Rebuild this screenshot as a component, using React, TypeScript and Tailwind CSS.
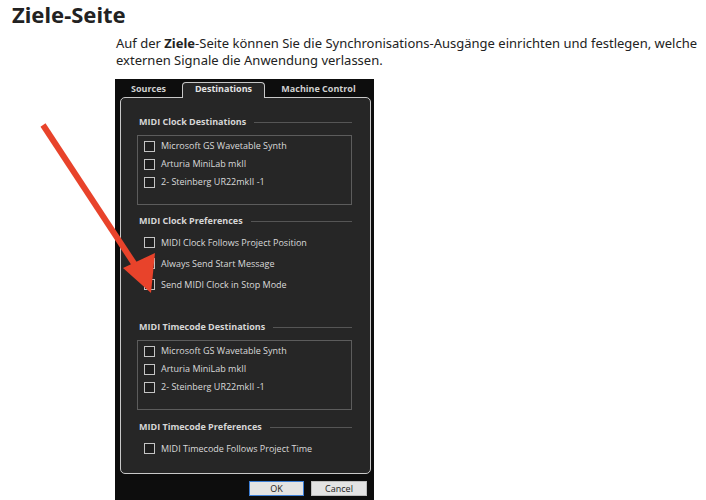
const destinations = [
  "Microsoft GS Wavetable Synth",
  "Arturia MiniLab mkII",
  "2- Steinberg UR22mkII -1",
];

function Checkbox() {
  return <span className="block h-[11px] w-[11px] shrink-0 border-[1.5px] border-[#c4c4c4] bg-[#1e1e1e]" />;
}

function GroupTitle({ label }: { label: string }) {
  return (
    <div className="flex h-[12px] items-center gap-2 pl-[2px]">
      <span className="whitespace-nowrap text-[9px] font-bold text-[#d6d6d6]">{label}</span>
      <span className="h-px flex-1 bg-[#555555]" />
    </div>
  );
}

function DeviceList() {
  return (
    <div className="flex h-[70px] flex-col border border-[#5c5c5c] pl-[6px] pt-[1px]">
      {destinations.map((d) => (
        <div key={d} className="flex h-[18px] items-center gap-[6px]">
          <Checkbox />
          <span className="whitespace-nowrap text-[9px] text-[#dadada]">{d}</span>
        </div>
      ))}
    </div>
  );
}

function PrefRow({ label }: { label: string }) {
  return (
    <div className="flex h-[21px] items-center gap-[6px] pl-[7px]">
      <Checkbox />
      <span className="whitespace-nowrap text-[9px] text-[#dadada]">{label}</span>
    </div>
  );
}

export default function App() {
  return (
    <div className="relative h-[500px] w-[706px] overflow-hidden bg-white font-['Noto_Sans',sans-serif]">
      {/* Page text */}
      <h1 className="pl-[12px] text-[22px] font-bold leading-[28px] text-[#222222]">Ziele-Seite</h1>
      <p className="ml-[116px] mt-[7px] text-[13px] leading-[17px] text-[#222222]">
        Auf der <b>Ziele</b>-Seite können Sie die Synchronisations-Ausgänge einrichten und festlegen, welche externen
        Signale die Anwendung verlassen.
      </p>

      {/* Dialog screenshot */}
      <div className="ml-[115px] mt-[10px] flex h-[430px] w-[259px] flex-col bg-[#0d0d0d] font-['Open_Sans',sans-serif]">
        <div className="flex h-[18px] items-end">
          <div className="flex h-[18px] w-[67px] items-center justify-center pt-[1px] text-[9px] font-bold text-[#d0d0d0]">Sources</div>
          <div className="relative z-10 -mb-px flex h-[16px] w-[83px] items-center justify-center rounded-t-[4px] border border-b-0 border-[#c8c8c8] bg-[#262626] pb-[3px] text-[9px] font-bold text-[#e4e4e4]">
            Destinations
          </div>
          <div className="flex h-[18px] w-[107px] items-center justify-center pt-[1px] text-[9px] font-bold text-[#d0d0d0]">Machine Control</div>
        </div>

        <div className="ml-[5px] flex h-[377px] w-[251px] flex-col rounded-[5px] border border-[#c8c8c8] bg-[#262626] pl-[16px] pr-[18px] pt-[18px]">
          <GroupTitle label="MIDI Clock Destinations" />
          <div className="mt-[7px]">
            <DeviceList />
          </div>
          <div className="mt-[10px]">
            <GroupTitle label="MIDI Clock Preferences" />
          </div>
          <div className="mt-[5px]">
            <PrefRow label="MIDI Clock Follows Project Position" />
            <PrefRow label="Always Send Start Message" />
            <PrefRow label="Send MIDI Clock in Stop Mode" />
          </div>
          <div className="mt-[26px]">
            <GroupTitle label="MIDI Timecode Destinations" />
          </div>
          <div className="mt-[7px]">
            <DeviceList />
          </div>
          <div className="mt-[11px]">
            <GroupTitle label="MIDI Timecode Preferences" />
          </div>
          <div className="mt-[5px]">
            <PrefRow label="MIDI Timecode Follows Project Time" />
          </div>
        </div>

        <div className="mt-[7px] flex justify-end gap-[7px] pr-[7px]">
          <button className="h-[15px] w-[55px] border border-[#3d7fd6] bg-[#e3e3e3] text-[9px] leading-none text-[#1a1a1a]">OK</button>
          <button className="h-[15px] w-[56px] border border-[#bdbdbd] bg-[#e3e3e3] text-[9px] leading-none text-[#1a1a1a]">Cancel</button>
        </div>
      </div>

      {/* Red arrow annotation */}
      <svg className="pointer-events-none absolute left-0 top-0" width="706" height="500" viewBox="0 0 706 500">
        <line x1="43" y1="125" x2="137" y2="268" stroke="#e8432b" strokeWidth="6" strokeLinecap="butt" />
        <polygon points="123,268 155,253 151,293" fill="#e8432b" />
      </svg>
    </div>
  );
}
